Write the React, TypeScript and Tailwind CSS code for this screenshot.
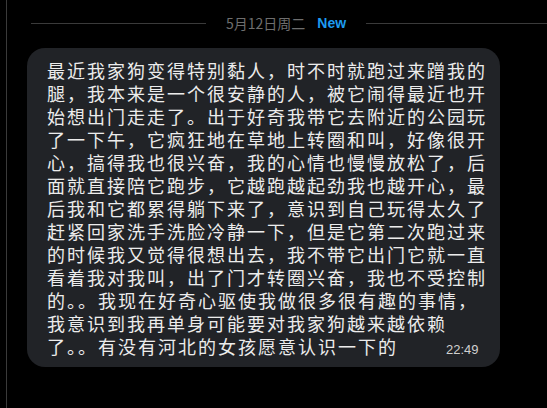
import React from 'react';

const MESSAGE =
  '最近我家狗变得特别黏人，时不时就跑过来蹭我的腿，我本来是一个很安静的人，被它闹得最近也开始想出门走走了。出于好奇我带它去附近的公园玩了一下午，它疯狂地在草地上转圈和叫，好像很开心，搞得我也很兴奋，我的心情也慢慢放松了，后面就直接陪它跑步，它越跑越起劲我也越开心，最后我和它都累得躺下来了，意识到自己玩得太久了赶紧回家洗手洗脸冷静一下，但是它第二次跑过来的时候我又觉得很想出去，我不带它出门它就一直看着我对我叫，出了门才转圈兴奋，我也不受控制的。。我现在好奇心驱使我做很多很有趣的事情，我意识到我再单身可能要对我家狗越来越依赖了。。有没有河北的女孩愿意认识一下的';

export default function App() {
  return (
    <div
      className="h-[408px] w-[547px] overflow-hidden bg-black pl-[6px]"
      style={{ fontFamily: '"Noto Sans CJK SC", "Noto Sans", sans-serif' }}
    >
      <div className="h-full border-l border-[#3a3a3a] pt-[14px]">
        {/* Date divider */}
        <div className="flex items-center">
          <div className="ml-[24px] h-px w-[175px] bg-[#3a3a3a]" />
          <span className="ml-[20px] text-[14px] leading-[18px] text-[#6e6e6e]">5月12日周二</span>
          <span
            className="ml-[12px] text-[14px] font-bold leading-[18px] text-[#1d9bf0]"
            style={{ fontFamily: '"Liberation Sans", sans-serif' }}
          >
            New
          </span>
          <div className="ml-[20px] h-px flex-1 bg-[#3a3a3a]" />
        </div>

        {/* Message bubble */}
        <div className="ml-[20px] mt-[16px] w-[473px] rounded-[18px] bg-[#212327] pb-[9px] pl-[20px] pr-[11px] pt-[11px]">
          <p className="text-[18px] leading-[23px] tracking-[2px] text-[#ececec]">
            {MESSAGE}
            <span
              className="ml-[48px] inline-block text-[13px] leading-[16px] tracking-normal text-[#d0d0d0]"
              style={{ fontFamily: '"Liberation Sans", sans-serif' }}
            >
              22:49
            </span>
          </p>
        </div>
      </div>
    </div>
  );
}
